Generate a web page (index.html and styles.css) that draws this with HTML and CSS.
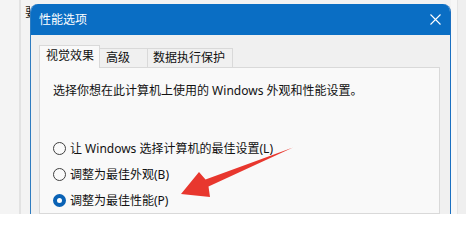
FILE: index.html
```html
<!DOCTYPE html>
<html lang="zh-CN">
<head>
<meta charset="utf-8">
<title>性能选项</title>
<link rel="stylesheet" href="styles.css">
</head>
<body>
<div class="screen">
  <div class="bg-left"><span class="bg-char">要</span></div>
  <div class="dialog">
    <div class="titlebar">
      <span class="title">性能选项</span>
      <span class="close">
        <svg width="11" height="11" viewBox="0 0 11 11"><path d="M0.5 0.5 L10.5 10.5 M10.5 0.5 L0.5 10.5" stroke="#ffffff" stroke-width="1.1" fill="none"/></svg>
      </span>
    </div>
    <div class="body">
      <div class="tabs">
        <div class="tab active">视觉效果</div>
        <div class="tab t2">高级</div>
        <div class="tab t3">数据执行保护</div>
      </div>
      <div class="panel">
        <p class="intro">选择你想在此计算机上使用的 Windows 外观和性能设置。</p>
        <div class="options">
          <div class="option"><span class="radio"></span><span>让 Windows 选择计算机的最佳设置(L)</span></div>
          <div class="option"><span class="radio"></span><span>调整为最佳外观(B)</span></div>
          <div class="option"><span class="radio checked"></span><span>调整为最佳性能(P)</span></div>
        </div>
      </div>
    </div>
  </div>
  <div class="bg-right"></div>
  <svg class="arrow" width="466" height="214" viewBox="0 0 466 214">
    <polygon points="181,194 199,172 205.5,179.5 293,147.5 208.5,186.5 210,197" fill="#e8372e"/>
  </svg>
</div>
</body>
</html>
```
FILE: styles.css
```css
html, body {
  margin: 0;
  padding: 0;
}
body {
  width: 466px;
  height: 214px;
  overflow: hidden;
  font-family: "Noto Sans", "Noto Sans CJK SC", sans-serif;
  font-size: 12px;
  color: #111;
}
.screen {
  position: relative;
  display: flex;
  height: 214px;
  background: #f2f2f2;
}
.bg-left {
  width: 30px;
  flex: none;
  overflow: hidden;
  background: linear-gradient(to right, #f4f4f4 0, #f4f4f4 19px, #e2e2e2 19px, #e2e2e2 21px, #f3f3f3 21px);
}
.bg-char {
  display: block;
  padding: 5px 0 0 25px;
  line-height: 16px;
  color: #222;
  white-space: nowrap;
}
.dialog {
  width: 421px;
  flex: none;
  margin-top: 4px;
  box-sizing: border-box;
  border-left: 1px solid #2f7cc0;
  border-right: 1px solid #1a6fc0;
  border-radius: 8px 8px 0 0;
  background: #f0f0f0;
  overflow: hidden;
  display: flex;
  flex-direction: column;
}
.titlebar {
  height: 31px;
  flex: none;
  background: #0a6ec4;
  color: #fff;
  display: flex;
  align-items: center;
  padding-left: 8px;
}
.title {
  line-height: 16px;
  margin-top: 1px;
}
.close {
  margin-left: auto;
  width: 30px;
  height: 31px;
  display: flex;
  align-items: center;
  justify-content: center;
}
.body {
  flex: 1;
  display: flex;
  flex-direction: column;
  padding: 10px 10px 0 8px;
}
.tabs {
  display: flex;
  align-items: flex-end;
  height: 23px;
}
.tab {
  box-sizing: border-box;
  border: 1px solid #d9d9d9;
  border-bottom: 0;
  white-space: nowrap;
}
.tab.active {
  position: relative;
  z-index: 1;
  width: 61px;
  height: 23px;
  padding-left: 6px;
  line-height: 20px;
  background: #f9f9f9;
}
.tab.t2, .tab.t3 {
  height: 19px;
  margin-bottom: 1px;
  line-height: 18px;
  border-left: 0;
  background: #f0f0f0;
}
.tab.t2 {
  width: 48px;
  padding-left: 6px;
}
.tab.t3 {
  width: 85px;
  padding-left: 5px;
}
.panel {
  flex: 1;
  width: 401px;
  box-sizing: border-box;
  margin-top: -1px;
  border: 1px solid #d9d9d9;
  background: #f9f9f9;
  padding: 14px 0 0 13px;
}
.intro {
  margin: 0;
  line-height: 18px;
}
.options {
  margin-top: 35px;
}
.option {
  height: 26px;
  display: flex;
  align-items: center;
  gap: 4px;
  white-space: nowrap;
}
.radio {
  width: 13px;
  height: 13px;
  box-sizing: border-box;
  border: 1px solid #404040;
  border-radius: 50%;
  background: #fafafa;
  flex: none;
}
.radio.checked {
  border: 4px solid #0a62b5;
  background: #ffffff;
}
.bg-right {
  flex: 1;
  background: linear-gradient(to right, #f7f7f7 0, #f7f7f7 6px, #e4e4e4 6px, #e4e4e4 7px, #efefef 7px);
}
.arrow {
  position: absolute;
  left: 0;
  top: 0;
  pointer-events: none;
}
```
